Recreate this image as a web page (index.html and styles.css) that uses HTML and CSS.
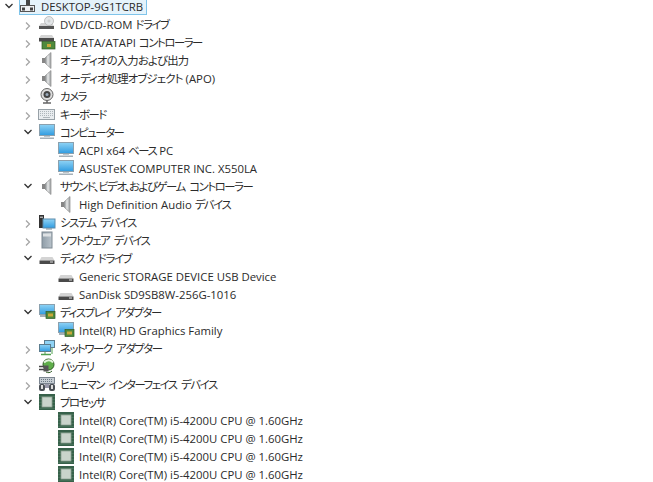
FILE: index.html
```html
<!DOCTYPE html>
<html lang="ja">
<head>
    <meta charset="UTF-8">
    <title>デバイス マネージャー</title>
    <link rel="stylesheet" href="styles.css">
</head>
<body>
    <svg class="defs" width="0" height="0">
        <defs>
            <linearGradient id="screen" x1="0" y1="0" x2="0" y2="1"><stop offset="0" stop-color="#8fd3f5"/><stop offset="1" stop-color="#2f9be0"/></linearGradient>
            <linearGradient id="cone" x1="0" y1="0" x2="1" y2="0"><stop offset="0" stop-color="#8e9294"/><stop offset=".5" stop-color="#d5d8d9"/><stop offset="1" stop-color="#a3a6a8"/></linearGradient>
            <linearGradient id="tower" x1="0" y1="0" x2="1" y2="0"><stop offset="0" stop-color="#8f9da8"/><stop offset="1" stop-color="#b9c3cb"/></linearGradient>
        </defs>
        <symbol id="open" viewBox="0 0 10 10"><path d="M1.500 3l3.500 3.500 3.500-3.500" fill="none" stroke="#333" stroke-width="1.3"/></symbol>
        <symbol id="closed" viewBox="0 0 10 10"><path d="M3 1.500l3.500 3.500-3.500 3.500" fill="none" stroke="#a6a6a6" stroke-width="1.3"/></symbol>
        <symbol id="pc" viewBox="0 0 18 18"><rect x="1.500" y="1.500" width="15" height="11" fill="url(#screen)" stroke="#8aa0ae"/><rect x="6" y="13" width="6" height="1" fill="#bcc6cc"/><rect x="2" y="14.500" width="14" height="1.500" fill="#a5b0b8"/></symbol>
        <symbol id="speaker" viewBox="0 0 18 18"><path d="M4 7h3v5H4z" fill="#858585"/><path d="M7 7l6-5.500v16L7 12z" fill="url(#cone)" stroke="#8a8a8a" stroke-width=".7"/><path d="M10 4.500v10" stroke="#eee" stroke-width=".8"/></symbol>
        <symbol id="disk" viewBox="0 0 18 18"><path d="M3.500 8h11l2 3.500h-15z" fill="#d4d4d4"/><rect x="1.500" y="11.500" width="15" height="3.500" fill="#4a4a4a"/><rect x="12" y="12.500" width="3" height="1" fill="#ddd"/></symbol>
        <symbol id="cpu" viewBox="0 0 18 18"><rect x="1" y="1" width="16" height="16" fill="#37614a"/><path d="M1 3.500h16M1 6.500h16M1 9.500h16M1 12.500h16M1 15.500h16" stroke="#4f7a62" stroke-width=".6"/><rect x="4" y="4" width="10" height="10" fill="#c9d4cb" stroke="#8fa393" stroke-width=".8"/></symbol>
        <symbol id="display" viewBox="0 0 18 18"><rect x="1.500" y="1.500" width="15" height="10" fill="url(#screen)" stroke="#8aa0ae"/><rect x="2" y="12" width="8" height="2" fill="#a5b0b8"/><rect x="8" y="8.500" width="9" height="7" fill="#4f8a3c" stroke="#2f5a24" stroke-width=".7"/><rect x="10" y="10.500" width="5" height="3" fill="#c9a83a"/></symbol>
        <symbol id="ide" viewBox="0 0 18 18"><path d="M3 2h11l2 3H1z" fill="#d4d4d4"/><rect x="1" y="5" width="15" height="3.500" fill="#4a4a4a"/><rect x="4" y="8.500" width="13" height="7.500" fill="#4f8a3c" stroke="#2f5a24" stroke-width=".7"/><rect x="9" y="11" width="4" height="3" fill="#c9a83a"/></symbol>
        <symbol id="dvd" viewBox="0 0 18 18"><path d="M3 8h11l2 3H1z" fill="#d4d4d4"/><rect x="1" y="11" width="15" height="3" fill="#555"/><circle cx="11" cy="6" r="4.500" fill="#e3e6e8" stroke="#aaa" stroke-width=".7"/><circle cx="11" cy="6" r="1" fill="#fff" stroke="#999" stroke-width=".5"/></symbol>
        <symbol id="camera" viewBox="0 0 18 18"><circle cx="9" cy="7.500" r="6" fill="#dcdcdc" stroke="#666"/><circle cx="9" cy="7.500" r="3.500" fill="#444"/><circle cx="9" cy="7.500" r="1.500" fill="#9ab"/><path d="M9 13.500v2M5 16h8" stroke="#666" stroke-width="1.500"/></symbol>
        <symbol id="keyboard" viewBox="0 0 18 18"><rect x=".5" y="4.500" width="16" height="10" fill="#e8ecef" stroke="#98a1a7"/><path d="M2 6.500h13M2 8.500h13M2 10.500h13" stroke="#aeb6bb" stroke-dasharray="1 1"/><path d="M5 12.500h7" stroke="#aeb6bb"/></symbol>
        <symbol id="system" viewBox="0 0 18 18"><rect x="1" y="2" width="5" height="13" fill="#333"/><rect x="2" y="3.500" width="3" height="1.500" fill="#aaa"/><rect x="5" y="6" width="12" height="9" fill="url(#screen)" stroke="#5c8bab"/><path d="M8 16h6" stroke="#7a8a94"/></symbol>
        <symbol id="software" viewBox="0 0 18 18"><rect x="4" y="1" width="10" height="16" fill="url(#tower)" stroke="#7f8a93"/><rect x="5" y="2.500" width="8" height="3" fill="#dde1e4"/></symbol>
        <symbol id="network" viewBox="0 0 18 18"><rect x="6.500" y="1.500" width="10" height="7" fill="#8fd3f5" stroke="#5c7d8f"/><rect x="1.500" y="5.500" width="11" height="7" fill="url(#screen)" stroke="#5c7d8f"/><path d="M3 15.500h10" stroke="#4fa04f" stroke-width="1.500"/><path d="M7 13v2M14 9v6" stroke="#4fa04f"/></symbol>
        <symbol id="battery" viewBox="0 0 18 18"><circle cx="10.500" cy="7.500" r="5.500" fill="#5fae4a" stroke="#2f5a24"/><path d="M6 5.500c3-3 7-3 9 0" fill="none" stroke="#e4f4de" stroke-width="2"/><path d="M1 9.500h5M1 12.500h5" stroke="#444" stroke-width="1.300"/><rect x="5.500" y="8.500" width="5" height="6" fill="#555"/><path d="M8 15c2 1 4 1 6-1" fill="none" stroke="#2f5a24"/></symbol>
        <symbol id="hid" viewBox="0 0 18 18"><rect x="1.500" y="2.500" width="15" height="6" fill="#c5ccd2" stroke="#7b8590"/><path d="M3 4.500h12M3 6.500h12" stroke="#6c7885" stroke-dasharray="1 1"/><rect x="1" y="9" width="6" height="7" rx="2" fill="#4a4f55"/><rect x="11" y="9" width="6" height="7" rx="2" fill="#4a4f55"/><rect x="7" y="9" width="4" height="4" fill="#99a"/><rect x="3" y="10" width="2" height="4" fill="#ddd"/><rect x="13" y="10" width="2" height="4" fill="#ddd"/></symbol>
        <symbol id="root" viewBox="0 0 18 18"><rect x="7" y="0" width="4" height="8" fill="#444"/><rect x="1.500" y="7.500" width="14" height="6" fill="#eef0f2" stroke="#555"/><rect x="3" y="9.500" width="3" height="3" fill="#444"/><rect x="11" y="9.500" width="3" height="3" fill="#444"/></symbol>
    </svg>
    <ul class="tree">
        <li class="row root"><svg class="arrow open"><use href="#open"/></svg><span class="selected"><svg class="icon"><use href="#root"/></svg><span class="label">DESKTOP-9G1TCRB</span></span></li>
        <li class="row lv1"><svg class="arrow"><use href="#closed"/></svg><svg class="icon"><use href="#dvd"/></svg><span class="label">DVD/CD-ROM <span class="jp">ドライブ</span></span></li>
        <li class="row lv1"><svg class="arrow"><use href="#closed"/></svg><svg class="icon"><use href="#ide"/></svg><span class="label">IDE ATA/ATAPI <span class="jp">コントローラー</span></span></li>
        <li class="row lv1"><svg class="arrow"><use href="#closed"/></svg><svg class="icon"><use href="#speaker"/></svg><span class="label"><span class="jp mixed">オーディオの入力および出力</span></span></li>
        <li class="row lv1"><svg class="arrow"><use href="#closed"/></svg><svg class="icon"><use href="#speaker"/></svg><span class="label"><span class="jp mixed">オーディオ処理オブジェクト</span> (APO)</span></li>
        <li class="row lv1"><svg class="arrow"><use href="#closed"/></svg><svg class="icon"><use href="#camera"/></svg><span class="label"><span class="jp">カメラ</span></span></li>
        <li class="row lv1"><svg class="arrow"><use href="#closed"/></svg><svg class="icon"><use href="#keyboard"/></svg><span class="label"><span class="jp">キーボード</span></span></li>
        <li class="row lv1"><svg class="arrow open"><use href="#open"/></svg><svg class="icon"><use href="#pc"/></svg><span class="label"><span class="jp">コンピューター</span></span></li>
        <li class="row lv2"><svg class="icon"><use href="#pc"/></svg><span class="label">ACPI x64 <span class="jp">ベース</span> PC</span></li>
        <li class="row lv2"><svg class="icon"><use href="#pc"/></svg><span class="label">ASUSTeK COMPUTER INC. X550LA</span></li>
        <li class="row lv1"><svg class="arrow open"><use href="#open"/></svg><svg class="icon"><use href="#speaker"/></svg><span class="label"><span class="jp">サウンド、ビデオ、およびゲーム コントローラー</span></span></li>
        <li class="row lv2"><svg class="icon"><use href="#speaker"/></svg><span class="label">High Definition Audio <span class="jp">デバイス</span></span></li>
        <li class="row lv1"><svg class="arrow"><use href="#closed"/></svg><svg class="icon"><use href="#system"/></svg><span class="label"><span class="jp">システム デバイス</span></span></li>
        <li class="row lv1"><svg class="arrow"><use href="#closed"/></svg><svg class="icon"><use href="#software"/></svg><span class="label"><span class="jp">ソフトウェア デバイス</span></span></li>
        <li class="row lv1"><svg class="arrow open"><use href="#open"/></svg><svg class="icon"><use href="#disk"/></svg><span class="label"><span class="jp">ディスク ドライブ</span></span></li>
        <li class="row lv2"><svg class="icon"><use href="#disk"/></svg><span class="label">Generic STORAGE DEVICE USB Device</span></li>
        <li class="row lv2"><svg class="icon"><use href="#disk"/></svg><span class="label">SanDisk SD9SB8W-256G-1016</span></li>
        <li class="row lv1"><svg class="arrow open"><use href="#open"/></svg><svg class="icon"><use href="#display"/></svg><span class="label"><span class="jp">ディスプレイ アダプター</span></span></li>
        <li class="row lv2"><svg class="icon"><use href="#display"/></svg><span class="label">Intel(R) HD Graphics Family</span></li>
        <li class="row lv1"><svg class="arrow"><use href="#closed"/></svg><svg class="icon"><use href="#network"/></svg><span class="label"><span class="jp">ネットワーク アダプター</span></span></li>
        <li class="row lv1"><svg class="arrow"><use href="#closed"/></svg><svg class="icon"><use href="#battery"/></svg><span class="label"><span class="jp">バッテリ</span></span></li>
        <li class="row lv1"><svg class="arrow"><use href="#closed"/></svg><svg class="icon"><use href="#hid"/></svg><span class="label"><span class="jp">ヒューマン インターフェイス デバイス</span></span></li>
        <li class="row lv1"><svg class="arrow open"><use href="#open"/></svg><svg class="icon"><use href="#cpu"/></svg><span class="label"><span class="jp">プロセッサ</span></span></li>
        <li class="row lv2"><svg class="icon"><use href="#cpu"/></svg><span class="label">Intel(R) Core(TM) i5-4200U CPU @ 1.60GHz</span></li>
        <li class="row lv2"><svg class="icon"><use href="#cpu"/></svg><span class="label">Intel(R) Core(TM) i5-4200U CPU @ 1.60GHz</span></li>
        <li class="row lv2"><svg class="icon"><use href="#cpu"/></svg><span class="label">Intel(R) Core(TM) i5-4200U CPU @ 1.60GHz</span></li>
        <li class="row lv2"><svg class="icon"><use href="#cpu"/></svg><span class="label">Intel(R) Core(TM) i5-4200U CPU @ 1.60GHz</span></li>
    </ul>
</body>
</html>
```

FILE: styles.css
```css
html, body {
    height: 100%;
}
body {
    margin: 0;
    background-color: #fff;
    color: #2b2b2b;
    font-family: "Open Sans", "Noto Sans CJK JP", sans-serif;
    font-size: 11.35px;
    font-feature-settings: "palt";
    overflow: hidden;
}
.defs {
    display: block;
    height: 0;
}
/* the list is scrolled a little, the top row is cut off */
.tree {
    list-style: none;
    margin: -3px 0 0;
    padding: 0 0 0 4px;
}
.row {
    display: flex;
    align-items: center;
    height: 18px;
    white-space: nowrap;
}
.lv1 {
    padding-left: 19px;
}
.lv2 {
    padding-left: 53px;
}
.arrow {
    width: 10px;
    height: 10px;
    margin: 4px 5px 0 0;
    flex: none;
}
.arrow.open {
    margin-top: 0;
}
.icon {
    width: 18px;
    height: 18px;
    margin-right: 3px;
    flex: none;
}
.label {
    padding: 0 1px;
}
/* katakana is narrower in the original font */
.jp {
    letter-spacing: -1.4px;
    word-spacing: 3px;
}
.jp.mixed {
    letter-spacing: -0.8px;
}
.selected {
    display: flex;
    align-items: center;
    height: 17px;
    margin-top: 1px;
    padding-right: 3px;
    background-color: #e5f3fb;
    outline: 1px solid #7fc4ea;
    outline-offset: -1px;
}
```
